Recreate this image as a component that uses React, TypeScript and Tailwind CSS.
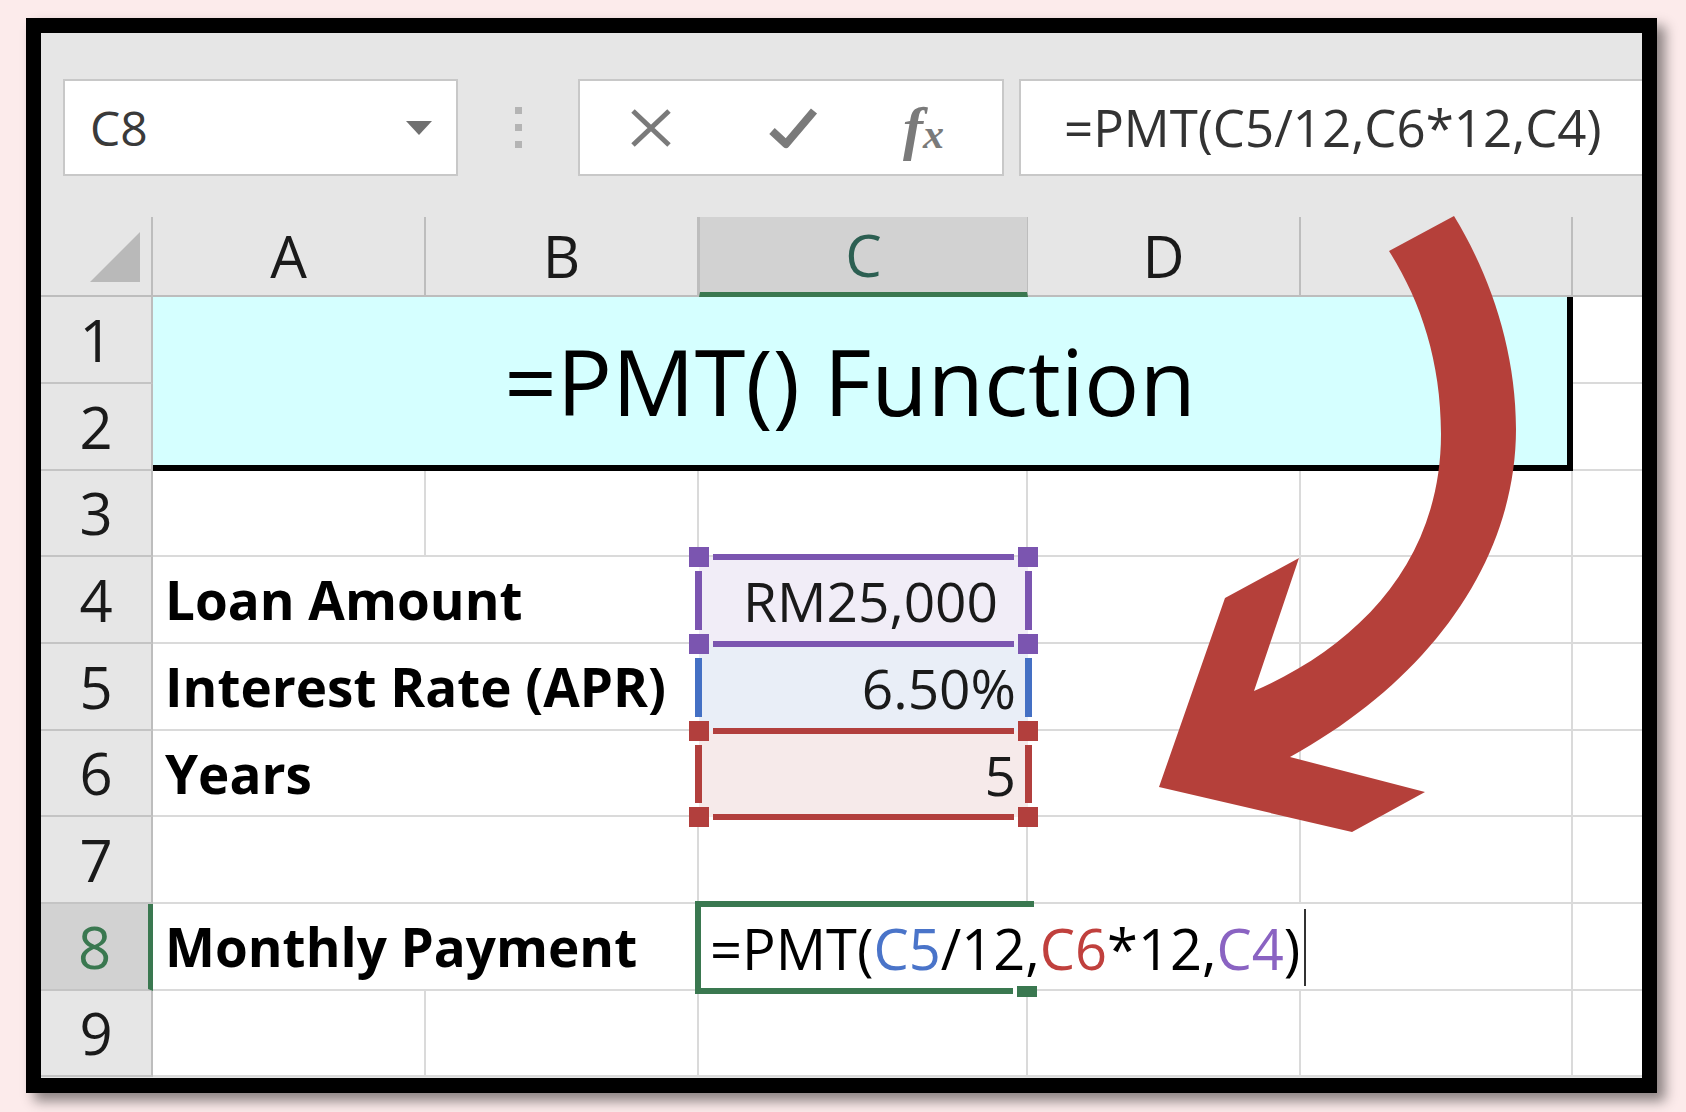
import React from 'react'

// column widths after the row-number column: A, B, C, D, E, F (cut off)
const COLS = [
  { name: 'A', w: 'w-[273px]' },
  { name: 'B', w: 'w-[273px]' },
  { name: 'C', w: 'w-[329px]' },
  { name: 'D', w: 'w-[273px]' },
  { name: 'E', w: 'w-[272px]' },
  { name: '', w: 'flex-1' },
]

const gridCell = 'border-r-2 border-b-2 border-[#dadada]'
const lastCell = 'border-b-2 border-[#dadada]'

function RowHead({ n, active }: { n: number; active?: boolean }) {
  if (active) {
    return (
      <div className="flex items-center justify-center bg-[#d2d2d2] border-r-[5px] border-r-[#3a7850] border-b-2 border-b-[#c4c4c4] text-[58px] leading-none text-[#3a7850]">
        {n}
      </div>
    )
  }
  return (
    <div className="flex items-center justify-center bg-[#e6e6e6] border-r-2 border-r-[#bdbdbd] border-b-2 border-b-[#c4c4c4] text-[58px] leading-none text-[#1a1a1a]">
      {n}
    </div>
  )
}

function Label({ text }: { text: string }) {
  return (
    <div className="col-span-2 flex items-center pl-[12px] border-b-2 border-[#dadada] text-[53px] font-bold leading-none text-black whitespace-nowrap">
      {text}
    </div>
  )
}

function ColumnHeaders() {
  return (
    <div className="flex h-[80px] shrink-0">
      <div className="w-[112px] shrink-0 flex items-end justify-end pr-[11px] pb-[13px] border-r-2 border-b-2 border-[#bdbdbd]">
        <svg width="50" height="50" viewBox="0 0 50 50">
          <path d="M50 0 L50 50 L0 50 Z" fill="#b9b9b9" />
        </svg>
      </div>
      {COLS.map((c) =>
        c.name === 'C' ? (
          <div
            key={c.name}
            className={`${c.w} shrink-0 flex items-center justify-center bg-[#d2d2d2] border-x border-[#bdbdbd] border-b-[5px] border-b-[#3a7850] text-[58px] leading-none text-[#2c5f52]`}
          >
            {c.name}
          </div>
        ) : (
          <div
            key={c.name || 'F'}
            className={`${c.w} ${c.name ? 'border-r-2' : ''} shrink-0 flex items-center justify-center border-b-2 border-[#bdbdbd] text-[58px] leading-none text-[#1a1a1a]`}
          >
            {c.name}
          </div>
        ),
      )}
    </div>
  )
}

function Toolbar() {
  return (
    <div className="h-[184px] shrink-0 flex items-start pt-[46px] pl-[22px]">
      <div className="w-[395px] h-[97px] shrink-0 bg-white border-2 border-[#c8c8c8] flex items-center justify-between pl-[25px] pr-[24px]">
        <span className="text-[48px] leading-none text-[#3a3a3a]">C8</span>
        <svg width="26" height="14" viewBox="0 0 26 14">
          <path d="M0 0 H26 L13 14 Z" fill="#707070" />
        </svg>
      </div>
      <div className="w-[120px] h-[97px] shrink-0 flex flex-col items-center justify-center gap-[10px]">
        <span className="w-[7px] h-[7px] bg-[#b4b4b4]" />
        <span className="w-[7px] h-[7px] bg-[#b4b4b4]" />
        <span className="w-[7px] h-[7px] bg-[#b4b4b4]" />
      </div>
      <div className="w-[426px] h-[97px] shrink-0 bg-white border-2 border-[#c8c8c8] flex items-center pl-[49px]">
        <svg width="44" height="40" viewBox="0 0 44 40">
          <path d="M4 3 L40 37 M40 3 L4 37" stroke="#7a7a7a" strokeWidth="5" />
        </svg>
        <svg width="52" height="44" viewBox="0 0 52 44" className="ml-[94px]">
          <path d="M5 25 L19 38 L47 5" stroke="#7a7a7a" strokeWidth="8" fill="none" strokeLinejoin="round" />
        </svg>
        <span className="ml-[84px] font-['Liberation_Serif',serif] italic font-bold text-[60px] leading-none text-[#7a7a7a]">
          f<span className="text-[42px]">x</span>
        </span>
      </div>
      <div className="flex-1 h-[97px] ml-[15px] bg-white border-y-2 border-l-2 border-[#c8c8c8] flex items-center pl-[43px]">
        <span className="text-[51px] leading-none text-[#333] whitespace-nowrap">=PMT(C5/12,C6*12,C4)</span>
      </div>
    </div>
  )
}

// coloured reference border drawn over a C cell
function RefBox({
  color,
  top,
  bottom,
  topSquares,
  bottomSquares,
}: {
  color: string
  top?: boolean
  bottom?: boolean
  topSquares?: boolean
  bottomSquares?: boolean
}) {
  const bg = color === 'purple' ? 'bg-[#7b55b0]' : color === 'blue' ? 'bg-[#4470c4]' : 'bg-[#b23f3d]'
  return (
    <>
      {top && <div className={`absolute z-10 left-[14px] right-[14px] top-[-3px] h-[6px] ${bg}`} />}
      {bottom && <div className={`absolute z-10 left-[14px] right-[14px] bottom-[-3px] h-[6px] ${bg}`} />}
      <div className={`absolute z-10 left-[-4px] top-[14px] bottom-[14px] w-[7px] ${bg}`} />
      <div className={`absolute z-10 right-[-4px] top-[14px] bottom-[14px] w-[7px] ${bg}`} />
      {topSquares && (
        <>
          <div className={`absolute z-10 left-[-10px] top-[-10px] w-[20px] h-[20px] ${bg}`} />
          <div className={`absolute z-10 right-[-10px] top-[-10px] w-[20px] h-[20px] ${bg}`} />
        </>
      )}
      {bottomSquares && (
        <>
          <div className={`absolute z-10 left-[-10px] bottom-[-10px] w-[20px] h-[20px] ${bg}`} />
          <div className={`absolute z-10 right-[-10px] bottom-[-10px] w-[20px] h-[20px] ${bg}`} />
        </>
      )}
    </>
  )
}

function Sheet() {
  return (
    <div className="grid grid-cols-[112px_273px_273px_329px_273px_272px_1fr] grid-rows-[87px_87px_86px_87px_87px_86px_87px_87px_86px] bg-white">
      {/* rows 1-2: merged title */}
      <RowHead n={1} />
      <div className="col-span-5 row-span-2 flex items-center justify-center bg-[#d5ffff] border-r-[6px] border-b-[6px] border-black text-[92px] leading-none text-black pr-[20px]">
        =PMT() Function
      </div>
      <div className={lastCell} />
      <RowHead n={2} />
      <div className={lastCell} />

      {/* row 3 */}
      <RowHead n={3} />
      <div className={gridCell} />
      <div className={gridCell} />
      <div className={gridCell} />
      <div className={gridCell} />
      <div className={gridCell} />
      <div className={lastCell} />

      {/* row 4 */}
      <RowHead n={4} />
      <Label text="Loan Amount" />
      <div className="relative flex items-center justify-end pr-[30px] bg-[#f1edf7] text-[55px] leading-none text-[#1a1a1a]">
        RM25,000
        <RefBox color="purple" top bottom topSquares bottomSquares />
      </div>
      <div className={gridCell} />
      <div className={gridCell} />
      <div className={lastCell} />

      {/* row 5 */}
      <RowHead n={5} />
      <Label text="Interest Rate (APR)" />
      <div className="relative flex items-center justify-end pr-[12px] bg-[#e9eef7] text-[55px] leading-none text-[#1a1a1a]">
        6.50%
        <RefBox color="blue" />
      </div>
      <div className={gridCell} />
      <div className={gridCell} />
      <div className={lastCell} />

      {/* row 6 */}
      <RowHead n={6} />
      <Label text="Years" />
      <div className="relative flex items-center justify-end pr-[12px] bg-[#f6eaea] text-[55px] leading-none text-[#1a1a1a]">
        5
        <RefBox color="red" top bottom topSquares bottomSquares />
      </div>
      <div className={gridCell} />
      <div className={gridCell} />
      <div className={lastCell} />

      {/* row 7 */}
      <RowHead n={7} />
      <div className={`col-span-2 ${gridCell}`} />
      <div className={gridCell} />
      <div className={gridCell} />
      <div className={gridCell} />
      <div className={lastCell} />

      {/* row 8 */}
      <RowHead n={8} active />
      <Label text="Monthly Payment" />
      <div className="relative flex items-center pl-[11px] text-[56px] leading-none text-black whitespace-nowrap">
        <span className="relative z-10 shrink-0">
          =PMT(<span className="text-[#4a74c9]">C5</span>/12,<span className="text-[#c0403d]">C6</span>*12,
          <span className="text-[#8a63c2]">C4</span>)
        </span>
        <span className="relative z-10 shrink-0 inline-block w-[2px] h-[77px] ml-[4px] bg-[#333]" />
        <div className="absolute z-10 left-[-4px] right-[-6px] top-[-3px] h-[6px] bg-[#3a7850]" />
        <div className="absolute z-10 left-[-4px] top-[-3px] bottom-[-3px] w-[6px] bg-[#3a7850]" />
        <div className="absolute z-10 left-[-4px] right-[15px] bottom-[-3px] h-[6px] bg-[#3a7850]" />
        <div className="absolute z-10 right-[-9px] bottom-[-6px] w-[20px] h-[11px] bg-[#3a7850]" />
      </div>
      <div className="border-b-2 border-[#dadada]" />
      <div className={gridCell} />
      <div className={lastCell} />

      {/* row 9 */}
      <RowHead n={9} />
      <div className={gridCell} />
      <div className={gridCell} />
      <div className={gridCell} />
      <div className={gridCell} />
      <div className={gridCell} />
      <div className={lastCell} />
    </div>
  )
}

function CurvedArrow() {
  return (
    <svg
      className="absolute left-0 top-0 pointer-events-none"
      width="1686"
      height="1112"
      viewBox="0 0 1686 1112"
    >
      <path
        d="M1389 251 L1454 216 C1490 275 1516 350 1516 429 C1516 560 1430 680 1290 757 L1425 792 L1352 832 L1159 787 L1225 598 L1299 558 L1254 691 C1360 645 1441 560 1441 434 C1441 360 1420 300 1389 251 Z"
        fill="#b5403a"
      />
    </svg>
  )
}

export default function App() {
  return (
    <div className="relative w-[1686px] h-[1112px] overflow-hidden bg-[#fcebeb] pl-[26px] pt-[18px] font-['Open_Sans','Noto_Sans',sans-serif]">
      <div className="w-[1631px] h-[1075px] border-[15px] border-black bg-[#e6e6e6] flex flex-col overflow-hidden shadow-[8px_8px_12px_rgba(0,0,0,0.45)]">
        <Toolbar />
        <ColumnHeaders />
        <Sheet />
      </div>
      <CurvedArrow />
    </div>
  )
}
